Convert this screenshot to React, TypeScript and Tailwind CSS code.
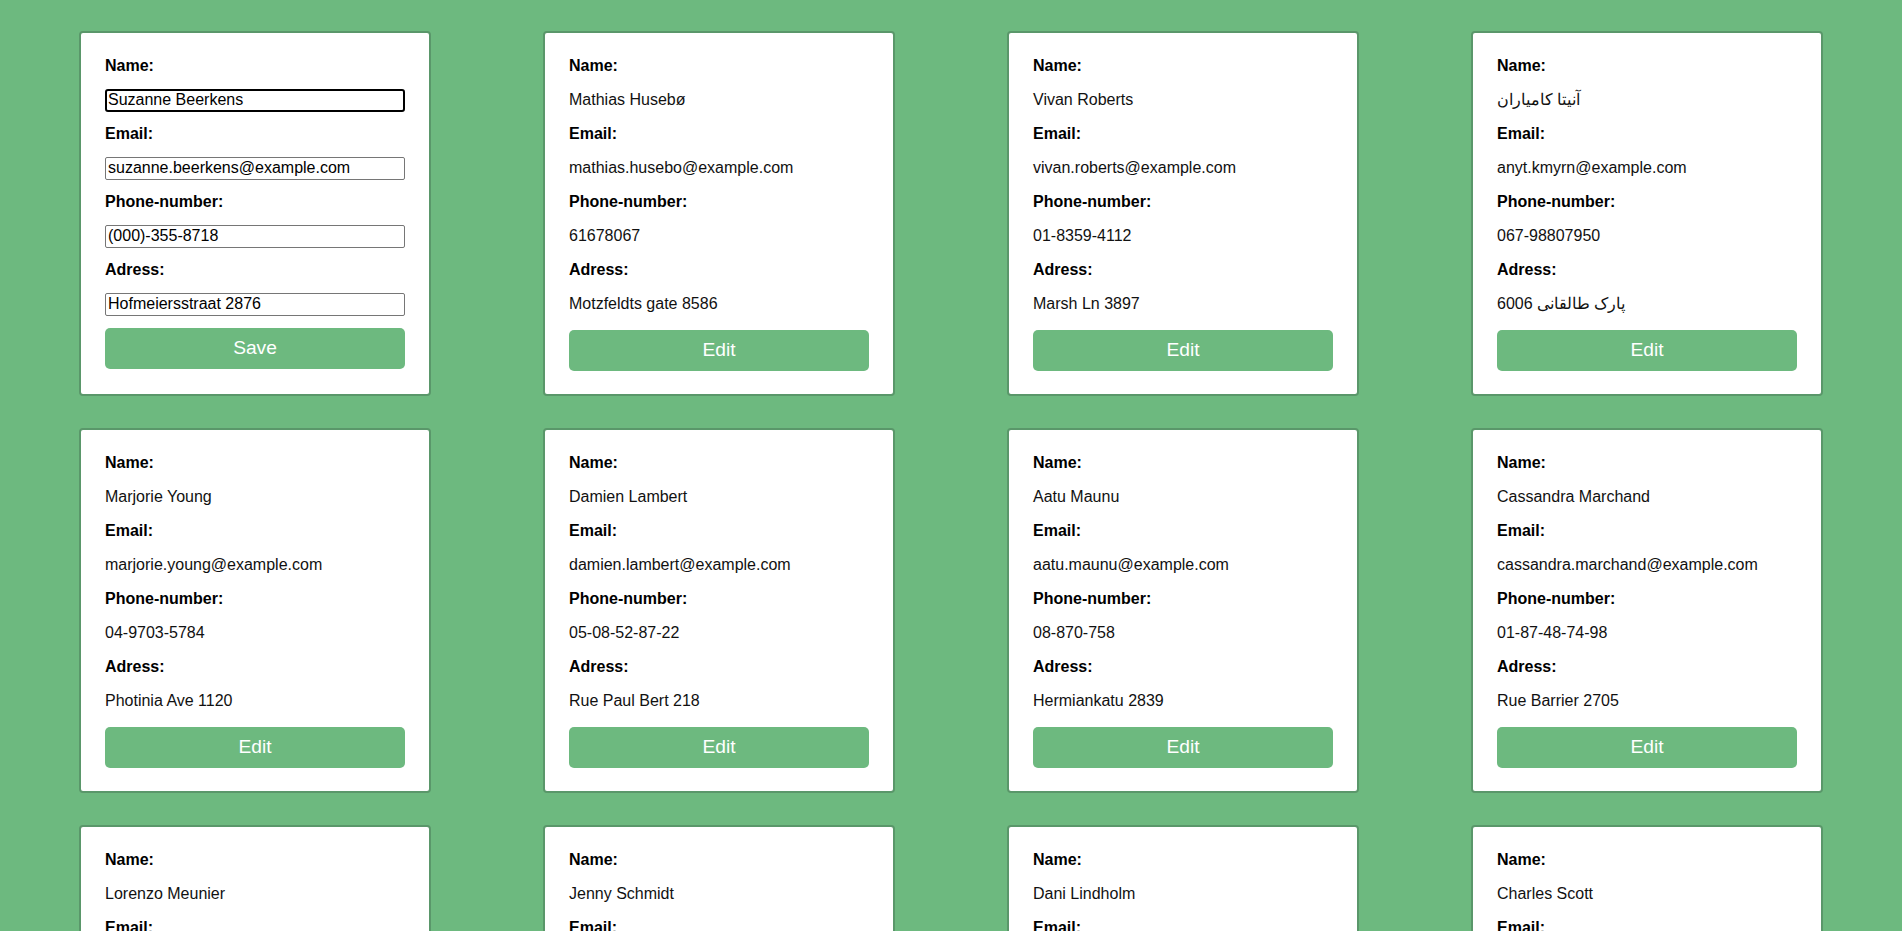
import { useState } from 'react';

type Person = { name: string; email: string; phone: string; address: string };

const people: Person[] = [
    { name: 'Suzanne Beerkens', email: 'suzanne.beerkens@example.com', phone: '(000)-355-8718', address: 'Hofmeiersstraat 2876' },
    { name: 'Mathias Husebø', email: 'mathias.husebo@example.com', phone: '61678067', address: 'Motzfeldts gate 8586' },
    { name: 'Vivan Roberts', email: 'vivan.roberts@example.com', phone: '01-8359-4112', address: 'Marsh Ln 3897' },
    { name: 'آنیتا کامیاران', email: 'anyt.kmyrn@example.com', phone: '067-98807950', address: '6006 پارک طالقانی' },
    { name: 'Marjorie Young', email: 'marjorie.young@example.com', phone: '04-9703-5784', address: 'Photinia Ave 1120' },
    { name: 'Damien Lambert', email: 'damien.lambert@example.com', phone: '05-08-52-87-22', address: 'Rue Paul Bert 218' },
    { name: 'Aatu Maunu', email: 'aatu.maunu@example.com', phone: '08-870-758', address: 'Hermiankatu 2839' },
    { name: 'Cassandra Marchand', email: 'cassandra.marchand@example.com', phone: '01-87-48-74-98', address: 'Rue Barrier 2705' },
    { name: 'Lorenzo Meunier', email: 'lorenzo.meunier@example.com', phone: '04-21-93-46-60', address: 'Rue de la Barre 4212' },
    { name: 'Jenny Schmidt', email: 'jenny.schmidt@example.com', phone: '0274-0716417', address: 'Schulstraße 6530' },
    { name: 'Dani Lindholm', email: 'dani.lindholm@example.com', phone: '07-262-101', address: 'Pispalan Valtatie 5107' },
    { name: 'Charles Scott', email: 'charles.scott@example.com', phone: '015394 32814', address: 'Grove Road 2431' },
];

const fields: { key: keyof Person; label: string }[] = [
    { key: 'name', label: 'Name:' },
    { key: 'email', label: 'Email:' },
    { key: 'phone', label: 'Phone-number:' },
    { key: 'address', label: 'Adress:' },
];

function Card({ person, editing }: { person: Person; editing: boolean }) {
    const [data, setData] = useState(person);

    return (
        <div className="w-[352px] bg-white border-2 border-[#5a976a] rounded-[4px] px-6 pt-[16px] pb-[23px]">
            {fields.map((f, i) => (
                <div key={f.key}>
                    <div className="h-[34px] flex items-center">
                        <span className="text-[16px] font-bold text-black">{f.label}</span>
                    </div>
                    <div className="h-[34px] flex items-center">
                        {editing ? (
                            <input
                                type="text"
                                value={data[f.key]}
                                onChange={(e) => setData({ ...data, [f.key]: e.target.value })}
                                className={`w-full h-[23px] text-[16px] text-black bg-white outline-none ${
                                    i === 0 ? 'border-2 border-black rounded-[3px] px-[1px]' : 'border border-[#767676] rounded-[2px] px-[2px]'
                                }`}
                            />
                        ) : (
                            <span className="text-[16px] text-[#111]">{data[f.key]}</span>
                        )}
                    </div>
                </div>
            ))}
            <button className={`w-full h-[41px] mt-[9px] bg-[#6db97f] rounded-[5px] text-white text-[19.2px] ${editing ? '-translate-y-[2px]' : ''}`}>
                {editing ? 'Save' : 'Edit'}
            </button>
        </div>
    );
}

export default function App() {
    return (
        <div className="min-h-screen bg-[#6db97f] font-['Liberation_Sans',Arial,sans-serif]">
            <div className="grid grid-cols-[repeat(4,352px)] justify-between gap-y-8 px-[79px] pt-[31px] pb-8">
                {people.map((p, i) => (
                    <Card key={p.email} person={p} editing={i === 0} />
                ))}
            </div>
        </div>
    );
}
